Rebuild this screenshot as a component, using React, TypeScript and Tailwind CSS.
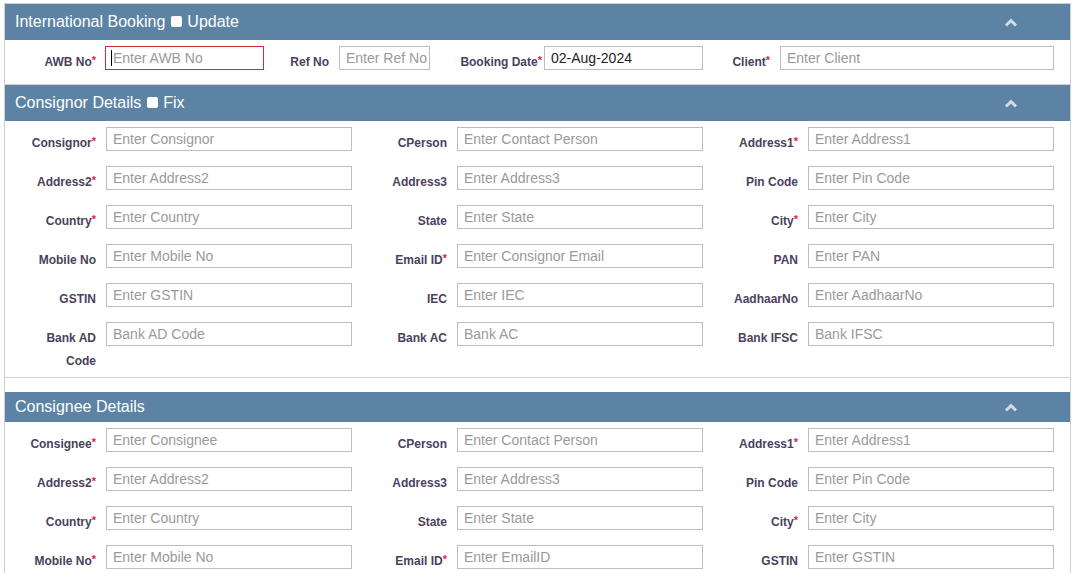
import React from 'react';

type Field = { label: string; required?: boolean; placeholder: string; value?: string };

const consignorRows: Field[][] = [
  [
    { label: 'Consignor', required: true, placeholder: 'Enter Consignor' },
    { label: 'CPerson', placeholder: 'Enter Contact Person' },
    { label: 'Address1', required: true, placeholder: 'Enter Address1' },
  ],
  [
    { label: 'Address2', required: true, placeholder: 'Enter Address2' },
    { label: 'Address3', placeholder: 'Enter Address3' },
    { label: 'Pin Code', placeholder: 'Enter Pin Code' },
  ],
  [
    { label: 'Country', required: true, placeholder: 'Enter Country' },
    { label: 'State', placeholder: 'Enter State' },
    { label: 'City', required: true, placeholder: 'Enter City' },
  ],
  [
    { label: 'Mobile No', placeholder: 'Enter Mobile No' },
    { label: 'Email ID', required: true, placeholder: 'Enter Consignor Email' },
    { label: 'PAN', placeholder: 'Enter PAN' },
  ],
  [
    { label: 'GSTIN', placeholder: 'Enter GSTIN' },
    { label: 'IEC', placeholder: 'Enter IEC' },
    { label: 'AadhaarNo', placeholder: 'Enter AadhaarNo' },
  ],
  [
    { label: 'Bank AD\nCode', placeholder: 'Bank AD Code' },
    { label: 'Bank AC', placeholder: 'Bank AC' },
    { label: 'Bank IFSC', placeholder: 'Bank IFSC' },
  ],
];

const consigneeRows: Field[][] = [
  [
    { label: 'Consignee', required: true, placeholder: 'Enter Consignee' },
    { label: 'CPerson', placeholder: 'Enter Contact Person' },
    { label: 'Address1', required: true, placeholder: 'Enter Address1' },
  ],
  [
    { label: 'Address2', required: true, placeholder: 'Enter Address2' },
    { label: 'Address3', placeholder: 'Enter Address3' },
    { label: 'Pin Code', placeholder: 'Enter Pin Code' },
  ],
  [
    { label: 'Country', required: true, placeholder: 'Enter Country' },
    { label: 'State', placeholder: 'Enter State' },
    { label: 'City', required: true, placeholder: 'Enter City' },
  ],
  [
    { label: 'Mobile No', required: true, placeholder: 'Enter Mobile No' },
    { label: 'Email ID', required: true, placeholder: 'Enter EmailID' },
    { label: 'GSTIN', placeholder: 'Enter GSTIN' },
  ],
];

function Star() {
  return <span className="relative top-[-2px] text-[11px] text-[#e8204a]">*</span>;
}

function Label({ text, required, className }: { text: string; required?: boolean; className: string }) {
  return (
    <label
      className={`shrink-0 whitespace-pre-line text-right text-[12px] font-bold leading-[23px] pt-[5px] text-[#4b3f5e] ${className}`}
    >
      {text}
      {required && <Star />}
    </label>
  );
}

const inputCls =
  'h-[24px] border border-[#bdbdbd] bg-white px-[6px] text-[14px] text-[#222] outline-none placeholder:text-[#9a9a9a]';

function Chevron() {
  return (
    <svg width="14" height="9" viewBox="0 0 14 9" className="mr-[52px]">
      <polyline points="2,7.5 7,2.5 12,7.5" fill="none" stroke="#d3dce5" strokeWidth="3" />
    </svg>
  );
}

function Header({ children, h }: { children: React.ReactNode; h: string }) {
  return (
    <div className={`flex items-center justify-between bg-[#5d83a4] pl-[10px] text-[16px] text-white ${h}`}>
      <div className="flex items-center pb-[1px]">{children}</div>
      <Chevron />
    </div>
  );
}

function Box() {
  return <span className="ml-[6px] mr-[5px] inline-block h-[11px] w-[11px] rounded-[2px] bg-white" />;
}

function FieldRow({ fields }: { fields: Field[] }) {
  return (
    <div className="flex">
      {fields.map((f) => (
        <div key={f.label} className="flex w-[351px] items-start">
          <Label text={f.label} required={f.required} className="w-[101px] pr-[10px]" />
          <input className={`${inputCls} w-[246px]`} placeholder={f.placeholder} />
        </div>
      ))}
    </div>
  );
}

export default function App() {
  return (
    <div className="h-[573px] overflow-hidden bg-white pl-[4px] pt-[3px] font-['Liberation_Sans',Arial,sans-serif]">
      <div className="h-[600px] w-[1067px] border-l border-r border-t border-[#cfcfcf]">
        {/* International Booking */}
        <Header h="h-[36px]">
          International Booking
          <Box />
          Update
        </Header>
        <div className="border-b border-[#d0d0d0] pb-[10px] pt-[6px]">
          <div className="flex items-start">
            <Label text="AWB No" required className="w-[100px] pr-[9px]" />
            <div className="relative">
              <input className={`${inputCls} w-[159px] border-[#cc2f2f] pl-[7px]`} placeholder="Enter AWB No" />
              <span className="absolute left-[6px] top-[4px] h-[16px] w-px bg-black" />
            </div>
            <Label text="Ref No" className="w-[75px] pr-[10px]" />
            <input className={`${inputCls} w-[91px] pr-[1px]`} placeholder="Enter Ref No" />
            <Label text="Booking Date" required className="w-[114px] pr-[2px]" />
            <input className={`${inputCls} w-[159px]`} defaultValue="02-Aug-2024" />
            <Label text="Client" required className="w-[77px] pr-[10px]" />
            <input className={`${inputCls} w-[274px]`} placeholder="Enter Client" />
          </div>
        </div>

        {/* Consignor Details */}
        <Header h="h-[36px]">
          Consignor Details
          <Box />
          Fix
        </Header>
        <div className="flex flex-col gap-[11px] border-b border-[#d0d0d0] pb-[4px] pt-[6px]">
          {consignorRows.map((row, i) => (
            <FieldRow key={i} fields={row} />
          ))}
        </div>

        <div className="h-[14px]" />

        {/* Consignee Details */}
        <Header h="h-[30px]">Consignee Details</Header>
        <div className="flex flex-col gap-[11px] pt-[6px]">
          {consigneeRows.map((row, i) => (
            <FieldRow key={i} fields={row} />
          ))}
        </div>
      </div>
    </div>
  );
}
